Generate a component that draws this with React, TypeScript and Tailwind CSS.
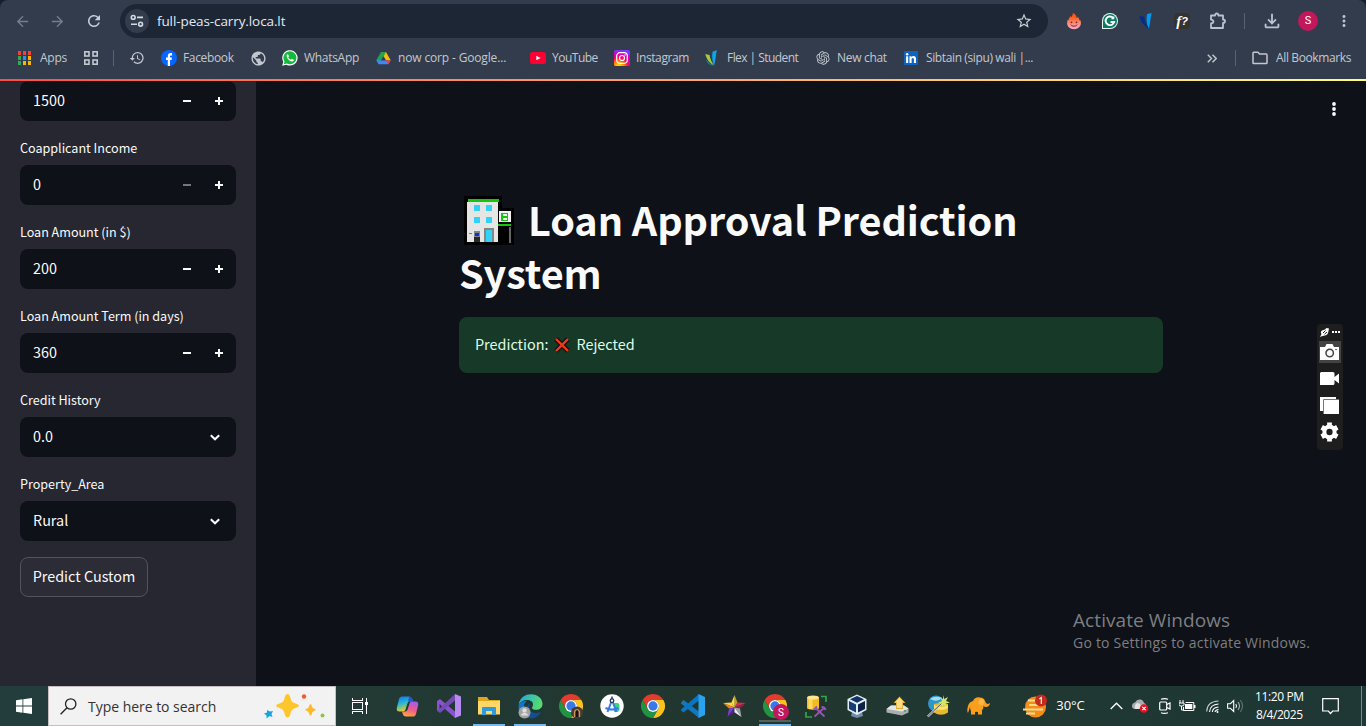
import React from "react";
import {
  MdStarBorder,
  MdOutlineFileDownload,
  MdHistory,
  MdPublic,
  MdMoreVert,
  MdRefresh,
  MdArrowBack,
  MdArrowForward,
} from "react-icons/md";
import { RiOpenaiFill } from "react-icons/ri";

const segoe = "font-['Open_Sans','Noto_Sans',sans-serif]";
const source = "font-['Noto_Sans_CJK_SC',sans-serif]";

/* ---------- Browser icons ---------- */

function TuneIcon() {
  return (
    <svg width="14" height="14" viewBox="0 0 14 14" fill="none" stroke="#d5dae2" strokeWidth="1.6">
      <circle cx="3.2" cy="3.4" r="1.9" />
      <path d="M7 3.4h6M1 10.2h6" />
      <circle cx="10.6" cy="10.2" r="1.9" />
    </svg>
  );
}

function AppsGrid() {
  const colors = ["#f44336", "#f44336", "#f44336", "#34a853", "#2196f3", "#fbb400", "#34a853", "#fbb400", "#fbb400"];
  return (
    <svg width="14" height="14" viewBox="0 0 14 14" shapeRendering="crispEdges">
      {colors.map((c, i) => (
        <rect key={i} x={(i % 3) * 5} y={Math.floor(i / 3) * 5} width="3" height="4" fill={c} />
      ))}
    </svg>
  );
}

function SquaresIcon() {
  return (
    <svg width="14" height="14" viewBox="0 0 14 14" fill="none" stroke="#c3c8d0" strokeWidth="1.6">
      <rect x="0.8" y="0.8" width="4.2" height="4.2" />
      <rect x="9" y="0.8" width="4.2" height="4.2" />
      <rect x="0.8" y="9" width="4.2" height="4.2" />
      <rect x="9" y="9" width="4.2" height="4.2" />
    </svg>
  );
}

function FacebookIcon() {
  return (
    <svg width="16" height="16" viewBox="0 0 16 16">
      <circle cx="8" cy="8" r="8" fill="#0866ff" />
      <path d="M6.8 16V9.9H5V7.4h1.8V6.1c0-2 1.1-3 2.8-3 .7 0 1.3.1 1.5.2v2.1h-1c-.9 0-1.1.5-1.1 1.1v.9H11l-.4 2.5H9V16z" fill="#fff" />
    </svg>
  );
}

function WhatsIcon() {
  return (
    <svg width="16" height="16" viewBox="0 0 16 16">
      <path d="M.2 15.800l1.100-4A7.700 7.700 0 1 1 4.300 14.700z" fill="#fff" />
      <path d="M1.700 14.300l.8-2.900A6.500 6.500 0 1 1 4.800 13.500z" fill="#14b83d" />
      <path d="M5.600 4.200c-.7.2-1.200 1-1 2 .5 2.600 2.900 4.900 5.300 5.200 1 .1 1.700-.5 1.900-1.200.1-.4-.1-.6-.4-.7l-1.500-.7c-.6-.1-.6.8-1.100.8-.9-.2-2.200-1.400-2.500-2.200 0-.5.7-.6.6-1.100l-.7-1.700c-.1-.3-.3-.4-.6-.4z" fill="#fff" />
    </svg>
  );
}

function DriveIcon() {
  return (
    <svg width="15" height="14" viewBox="0 0 15 14">
      <path d="M5 1h5l4.700 8.300H9.800z" fill="#fbbc04" />
      <path d="M5 1h5L7.500 5.400 5.200 9.300 2.800 13.300.3 9.300z" fill="#21a352" />
      <path d="M.3 9.300h14.400l-2.500 4H2.800z" fill="#4285f4" />
      <path d="M9.800 9.300h4.900l-2.500 4z" fill="#ea4335" />
      <path d="M7.500 5.400l2.300 3.900H5.200z" fill="#323c4d" />
    </svg>
  );
}

function YouTubeIcon() {
  return (
    <svg width="16" height="12" viewBox="0 0 16 12">
      <rect width="16" height="12" rx="2.800" fill="#ff0033" />
      <path d="M6.300 3.800L10.500 6 6.300 8.200z" fill="#fff" />
    </svg>
  );
}

function InstagramIcon() {
  return (
    <svg width="16" height="16" viewBox="0 0 16 16">
      <defs>
        <radialGradient id="ig" cx="0.3" cy="1.050" r="1.050">
          <stop offset="0.1" stopColor="#ffd200" />
          <stop offset="0.35" stopColor="#ff7a00" />
          <stop offset="0.55" stopColor="#ff0169" />
          <stop offset="0.8" stopColor="#d300c5" />
          <stop offset="1" stopColor="#7638fa" />
        </radialGradient>
      </defs>
      <rect width="16" height="16" rx="1.500" fill="url(#ig)" />
      <g fill="none" stroke="#fff" strokeWidth="1.200">
        <rect x="2.700" y="2.700" width="10.600" height="10.600" rx="3.200" />
        <circle cx="8" cy="8" r="2.500" />
      </g>
      <circle cx="11.100" cy="4.900" r=".7" fill="#fff" />
    </svg>
  );
}

function FlexIcon() {
  return (
    <svg width="13" height="16" viewBox="0 0 13 16">
      <path d="M7.600 1.400L12 .2C10.600 4 11 10.500 9 15.500 7 11 6.800 6 7.600 1.400z" fill="#0da5e8" />
      <path d="M.3 4l4.200.9c.6 4 2.200 7 4.500 10.600C4.800 13 1.500 9.500.3 4z" fill="#a7c93a" />
      <path d="M1 9.500C3 12.500 6 14.300 9 15.500 5 15.500 2 13.800 1 9.500z" fill="#1382a7" />
    </svg>
  );
}

function LinkedInIcon() {
  return (
    <svg width="14" height="14" viewBox="0 0 14 14">
      <rect width="14" height="14" rx="1" fill="#0a66c2" />
      <g fill="#fff">
        <rect x="2.100" y="5.300" width="2.100" height="6.700" />
        <circle cx="3.150" cy="3.200" r="1.250" />
        <path d="M5.500 5.300h2v.9c.4-.7 1.100-1.100 2-1.100 2 0 2.500 1.300 2.500 3.100V12H9.900V8.600c0-.9-.1-1.700-1.100-1.700s-1.200.8-1.200 1.700V12H5.500z" />
      </g>
    </svg>
  );
}

function FireIcon() {
  return (
    <svg width="14" height="17" viewBox="0 0 14 17">
      <defs>
        <linearGradient id="fire" x1="0" x2="0" y1="0" y2="1">
          <stop offset="0.25" stopColor="#ff5a14" />
          <stop offset="0.55" stopColor="#ff8468" />
          <stop offset="1" stopColor="#ffa6c8" />
        </linearGradient>
      </defs>
      <path
        d="M5.800 0C8.500 1.200 9.600 3 9.700 5.200L10.800 3.800C12 5 12.400 6.200 12.300 7.600L13.200 7C13.800 8 14 9.500 13.900 10.600C13.600 14 10.800 16.200 7 16.200S.3 14 .1 10.600C0 9 .3 7.600 1 6.300L1.800 7.500C1.900 5.800 2.400 4.300 3.600 3L4.400 4.200C5.300 3 5.900 1.600 5.800 0Z"
        fill="url(#fire)"
      />
      <circle cx="4.500" cy="9.300" r=".9" fill="#5f2d2c" />
      <circle cx="9.500" cy="9.300" r=".9" fill="#5f2d2c" />
      <path d="M3.700 11.700c1.900 2 4.700 2 6.600 0" stroke="#5f2d2c" fill="none" />
    </svg>
  );
}

function GrammarlyIcon() {
  return (
    <svg width="16" height="16" viewBox="0 0 16 16">
      <path d="M0 16V8a8 8 0 1 1 8 8z" fill="#e7f5f0" />
      <path d="M1 15V8a7 7 0 1 1 7 7z" fill="#087c62" />
      <path d="M11.200 5A4.300 4.300 0 1 0 12.100 9H8.500" fill="none" stroke="#fff" strokeWidth="1.900" />
      <path d="M12.300 2.800v3.500H8.900z" fill="#fff" />
    </svg>
  );
}

function VeeIcon() {
  return (
    <svg width="14" height="16" viewBox="0 0 14 16">
      <path d="M8 1L12.700 0C11.200 4 11.700 10.500 9.700 15.700 7.400 11 7.200 6 8 1z" fill="#0099f2" />
      <path d="M.3 3l5 .7c.3 4.300 1.900 8 4.400 12C4.600 12.500 1 8 .3 3z" fill="#082b86" />
    </svg>
  );
}

function PuzzleIcon() {
  return (
    <svg className="ml-[19px]" width="18" height="18" viewBox="0 0 18 18" fill="none" stroke="#b7c2d5" strokeWidth="1.800" strokeLinejoin="round">
      <path d="M2 3.500h4q0-2 1.700-2t1.700 2H14v4q2 .2 2 1.800T14 11v5H2v-4.500q2.400-.3 2.400-1.900T2 7.700z" />
    </svg>
  );
}

function FolderOutline() {
  return (
    <svg width="16" height="14" viewBox="0 0 16 14" fill="none" stroke="#c3c8d0" strokeWidth="1.500">
      <path d="M1 12.500V2q0-.8.8-.8h4.100l1.700 1.900h6.600q.8 0 .8.800v7.800q0 .8-.8.800H1.800q-.8 0-.8-.8z" />
    </svg>
  );
}

function Bookmark({ icon, label, width, tracking = "" }: { icon: React.ReactNode; label?: string; width: string; tracking?: string }) {
  return (
    <div className={`flex shrink-0 items-center ${width}`}>
      <span className="flex w-[22px] shrink-0 items-center">{icon}</span>
      {label && <span className={`whitespace-nowrap ${tracking}`}>{label}</span>}
    </div>
  );
}

function BrowserBar() {
  return (
    <header className={`h-[79px] shrink-0 bg-[#151e2b] text-[#c3c8d0] ${segoe}`}>
      <div className="flex h-full flex-col rounded-t-lg bg-[#323c4d]">
        <div className="flex h-[42px] items-center pr-[13px]">
          <MdArrowBack className="ml-[14px] size-[17px] text-[#757d8a]" />
          <MdArrowForward className="ml-[18px] size-[17px] text-[#757d8a]" />
          <MdRefresh className="ml-[19px] size-[18px] text-[#c5cee0]" />
          <div className="ml-[17px] flex h-[34px] w-[928px] items-center rounded-full bg-[#1c2635] pl-[5px] pr-[15px]">
            <span className="flex size-6 items-center justify-center rounded-full bg-[#323c4d]">
              <TuneIcon />
            </span>
            <span className="ml-2 text-[13.5px] tracking-[-0.1px] text-[#e4e8ef]">full-peas-carry.loca.lt</span>
            <MdStarBorder className="ml-auto size-[18px] text-[#c9ced6]" />
          </div>
          <div className="ml-[19px] flex flex-1 items-center">
            <span className="w-[35px]"><FireIcon /></span>
            <span className="w-[37px]"><GrammarlyIcon /></span>
            <span className="w-[35px]"><VeeIcon /></span>
            <span className="flex size-4 items-center justify-center rounded-sm bg-[#333] font-['Liberation_Serif',serif] text-[15px] font-bold italic leading-none text-white">
              f<span className="font-['Liberation_Sans',sans-serif] text-[11px]">?</span>
            </span>
            <PuzzleIcon />
            <span className="ml-[17px] h-4 w-px bg-[#586273]" />
            <MdOutlineFileDownload className="ml-[16px] size-[22px] text-[#b7c2d5]" />
            <span className="ml-[15px] flex size-5 items-center justify-center rounded-full bg-[#c2185b] font-[Roboto,sans-serif] text-[11px] text-white">
              S
            </span>
            <MdMoreVert className="ml-[17px] size-[18px] text-[#b7c2d5]" />
          </div>
        </div>
        <div className="flex h-8 items-center pl-[19px] pr-[14px] text-[12px]">
          <Bookmark icon={<AppsGrid />} label="Apps" width="w-[65px] -ml-px mr-px" tracking="tracking-[-0.25px]" />
          <SquaresIcon />
          <span className="ml-[15px] mr-[15px] h-4 w-px bg-[#586273]" />
          <MdHistory className="mr-[16px] size-4" />
          <Bookmark icon={<FacebookIcon />} label="Facebook" width="w-[89px]" tracking="tracking-[-0.35px]" />
          <MdPublic className="mr-[15px] size-[17px]" />
          <Bookmark icon={<WhatsIcon />} label="WhatsApp" width="w-[94px]" tracking="tracking-[-0.3px]" />
          <Bookmark icon={<DriveIcon />} label="now corp - Google..." width="w-[154px]" tracking="tracking-[-0.15px]" />
          <Bookmark icon={<YouTubeIcon />} label="YouTube" width="w-[84px]" tracking="tracking-[-0.5px]" />
          <Bookmark icon={<InstagramIcon />} label="Instagram" width="w-[91px]" tracking="tracking-[-0.4px]" />
          <Bookmark icon={<FlexIcon />} label="Flex | Student" width="w-[110px]" tracking="tracking-[-0.55px]" />
          <Bookmark icon={<RiOpenaiFill className="size-4" />} label="New chat" width="w-[89px]" tracking="tracking-[-0.3px]" />
          <Bookmark icon={<LinkedInIcon />} label="Sibtain (sipu) wali |..." width="w-[149px]" tracking="tracking-[-0.38px]" />
          <svg className="ml-auto" width="10" height="9" viewBox="0 0 10 9" fill="none" stroke="#c3c8d0" strokeWidth="1.400">
            <path d="M.8.7l3.700 3.800L.8 8.300M5.500.7l3.700 3.800-3.700 3.800" />
          </svg>
          <span className="ml-[18px] mr-[16px] h-4 w-px bg-[#586273]" />
          <FolderOutline />
          <span className="ml-2 w-[76px] whitespace-nowrap tracking-[-0.37px]">All Bookmarks</span>
        </div>
      </div>
    </header>
  );
}

/* ---------- Application ---------- */

function Label({ children }: { children: React.ReactNode }) {
  return <div className="mb-1 mt-4 flex h-6 items-center whitespace-nowrap pb-[2px] text-[12.6px] leading-none tracking-[-0.02px]">{children}</div>;
}

function NumberField({ value, atMin }: { value: string; atMin?: boolean }) {
  return (
    <div className="flex h-10 items-center rounded-lg bg-[#0e1117] pl-[13px] text-[14.4px] leading-none">
      <span className="flex-1 pb-[2px]">{value}</span>
      <svg width="64" height="40" viewBox="0 0 64 40" shapeRendering="crispEdges">
        <rect x="11" y="19" width="8" height="2" fill={atMin ? "#747780" : "#fafafa"} />
        <path d="M43 19h3v-3h2v3h3v2h-3v3h-2v-3h-3z" fill="#fafafa" />
      </svg>
    </div>
  );
}

function SelectField({ value }: { value: string }) {
  return (
    <div className="flex h-10 items-center rounded-lg bg-[#0e1117] pl-[13px] pr-4 text-[14.4px] leading-none">
      <span className="flex-1 pb-[2px]">{value}</span>
      <svg width="10" height="7" viewBox="0 0 10 7" fill="none" stroke="#fafafa" strokeWidth="2">
        <path d="M.8 1.200L5 5.300l4.200-4.100" />
      </svg>
    </div>
  );
}

function Sidebar() {
  return (
    <aside className={`w-64 shrink-0 bg-[#262730] px-5 text-[#fafafa] ${source}`}>
      <NumberField value="1500" />
      <Label>Coapplicant Income</Label>
      <NumberField value="0" atMin />
      <Label>Loan Amount (in $)</Label>
      <NumberField value="200" />
      <Label>Loan Amount Term (in days)</Label>
      <NumberField value="360" />
      <Label>Credit History</Label>
      <SelectField value="0.0" />
      <Label>Property_Area</Label>
      <SelectField value="Rural" />
      <button className="mt-4 flex h-10 w-32 items-center justify-center whitespace-nowrap rounded-lg border border-[#52535b] bg-[#2b2c36] pb-[2px] text-[14.4px] leading-none">
        Predict Custom
      </button>
    </aside>
  );
}

function BankIcon() {
  return (
    <svg className="ml-[5px] mt-[4px] shrink-0" width="50" height="50" viewBox="0 0 50 50" shapeRendering="crispEdges">
      <path d="M0 0h38v12h12v37H0z" fill="#000" />
      <rect x="4" y="3" width="31" height="3" fill="#16c60c" />
      <rect x="3" y="6" width="31" height="40" fill="#e5e5e5" />
      <g fill="#31d2f7">
        <rect x="10" y="9" width="6" height="6" />
        <rect x="22" y="9" width="6" height="6" />
        <rect x="10" y="21" width="6" height="6" />
        <rect x="22" y="21" width="6" height="6" />
      </g>
      <rect x="20" y="32" width="10" height="14" fill="#858585" />
      <rect x="22" y="34" width="6" height="12" fill="#31d2f7" />
      <rect x="10" y="35" width="6" height="6" fill="#858585" />
      <rect x="11" y="37" width="4" height="3" fill="#0037da" />
      <rect x="10" y="41" width="6" height="5" fill="#292929" />
      <rect x="5" y="37" width="3" height="1" fill="#16c60c" />
      <rect x="35" y="15" width="12" height="11" fill="#f2f2f2" />
      <path d="M37 17h7v8h-7z M39 18v2h4v-2z M39 22v2h4v-2z" fillRule="evenodd" fill="#16c60c" />
      <rect x="34" y="28" width="13" height="2" fill="#16c60c" />
      <rect x="45" y="31" width="2" height="16" fill="#666" />
    </svg>
  );
}

function MainPanel() {
  return (
    <main className={`relative flex-1 bg-[#0e1117] pl-[203px] pr-[203px] pt-[111px] text-[#fafafa] ${source}`}>
      <h1 className="w-[704px] text-[39.6px] font-bold leading-[53px] tracking-[-0.08px]">
        <span className="flex h-[53px] items-start">
          <BankIcon />
          <span className="ml-[14px] whitespace-nowrap">Loan Approval Prediction</span>
        </span>
        <span className="block h-[53px]">System</span>
      </h1>
      <div className="mt-[19px] flex h-14 w-[704px] items-center rounded-lg bg-[#173928] px-4 text-[14.4px] leading-none text-[#dffde9]">
        <span className="pb-[2px]">Prediction:</span>
        <svg className="mx-[6px]" width="16" height="16" viewBox="0 0 16 16">
          <path d="M2 2l12 12M14 2L2 14" stroke="#16100d" strokeWidth="4.800" />
          <path d="M2 2l12 12M14 2L2 14" stroke="#f03a17" strokeWidth="2.400" />
        </svg>
        <span className="pb-[2px]">Rejected</span>
      </div>
      <svg className="absolute right-[29px] top-[20px]" width="6" height="16" viewBox="0 0 6 16" fill="#fafafa">
        <circle cx="3" cy="3" r="1.900" />
        <circle cx="3" cy="8" r="1.900" />
        <circle cx="3" cy="13" r="1.900" />
      </svg>
      <CapturePanel />
      <div className={`absolute left-[817px] top-[526px] whitespace-nowrap text-[#7d7f83] ${segoe}`}>
        <div className="text-[19px] leading-[26px] tracking-[0.08px]">Activate Windows</div>
        <div className="text-[14px] leading-[20px] tracking-[0.22px]">Go to Settings to activate Windows.</div>
      </div>
    </main>
  );
}

function CapturePanel() {
  return (
    <div className="absolute right-[23px] top-[243px] flex h-[126px] w-[26px] flex-col items-start rounded-sm bg-[#1e1e1e] pl-[2px]">
      <div className="ml-[1px] mt-[3px] flex h-[10px] items-center gap-[3px]">
        <svg width="9" height="9" viewBox="0 0 9 9">
          <path d="M0 9l1.500-3Q0 4 2 2.500L5 1.500 6.500 0 9 .5 8.500 3Q8 7 5 7.500L2.500 8z" fill="#fff" />
          <path d="M3 5l2.500-2.500M4.500 6.200L7 4" stroke="#1e1e1e" />
        </svg>
        <svg width="8" height="2" viewBox="0 0 8 2" fill="#fff">
          <path d="M0 0h2v2H0zM3 0h2v2H3zM6 0h2v2H6z" />
        </svg>
      </div>
      <div className="mt-1 flex h-[22px] w-[22px] items-center pl-[1px] bg-[#434343]">
        <svg width="19" height="16" viewBox="0 0 19 16">
          <path d="M0 3h5l1.500-3h6L14 3h5v13H0z" fill="#fff" />
          <circle cx="9.700" cy="9" r="3.700" fill="#fff" stroke="#434343" strokeWidth="1.500" />
          <circle cx="16" cy="5.500" r=".8" fill="#434343" />
        </svg>
      </div>
      <svg className="ml-px mt-[9px]" width="19" height="13" viewBox="0 0 19 13" fill="#fff">
        <path d="M1 0h12q1.500 0 1.500 1.500V5L19 1.500v10L14.500 8v3.500q0 1.500-1.500 1.500H0V1z" />
      </svg>
      <svg className="ml-px mt-[12px]" width="19" height="17" viewBox="0 0 19 17">
        <path d="M0 0h16v14H0z" fill="#fff" />
        <path d="M3.500 2.500H19V17H3.500z" fill="#fff" />
        <path d="M3.500 17V2.500H19" fill="none" stroke="#777" />
      </svg>
      <svg className="ml-px mt-[8px]" width="19" height="20" viewBox="0 0 20 20" preserveAspectRatio="none">
        <circle cx="10" cy="10" r="5.400" fill="none" stroke="#fff" strokeWidth="4.200" />
        <g stroke="#fff" strokeWidth="5">
          <path d="M10 .5v4M10 15.500v4M1.800 5.250l3.400 2M14.800 12.750l3.400 2M1.800 14.750l3.400-2M14.800 7.250l3.400-2" />
        </g>
      </svg>
    </div>
  );
}

/* ---------- Taskbar icons ---------- */

function ChromeLogo({ badge }: { badge?: React.ReactNode }) {
  return (
    <svg width="24" height="24" viewBox="0 0 48 48" className="overflow-visible">
      <path d="M3.200 12A24 24 0 0 1 44.800 12H24A12 12 0 0 0 13.600 30z" fill="#e33b2e" />
      <path d="M44.800 12A24 24 0 0 1 24 48L34.400 30A12 12 0 0 0 24 12z" fill="#fcc31e" />
      <path d="M24 48A24 24 0 0 1 3.200 12L13.600 30A12 12 0 0 0 34.400 30z" fill="#229342" />
      <circle cx="24" cy="24" r="12" fill="#fff" />
      <circle cx="24" cy="24" r="9.300" fill="#3b78e7" />
      {badge}
    </svg>
  );
}

function CopilotLogo() {
  return (
    <svg width="23" height="21" viewBox="0 0 23 21">
      <defs>
        <linearGradient id="cpa" x1="0" y1="0" x2="0.3" y2="1">
          <stop stopColor="#1b6ee8" />
          <stop offset="0.5" stopColor="#22b8d8" />
          <stop offset="1" stopColor="#e9c92c" />
        </linearGradient>
        <linearGradient id="cpb" x1="0.6" y1="0" x2="0.3" y2="1">
          <stop stopColor="#a55bea" />
          <stop offset="0.5" stopColor="#ef5b8c" />
          <stop offset="1" stopColor="#ffa63d" />
        </linearGradient>
      </defs>
      <path d="M5.500.5H13q2.500 0 3.200 2.500l.8 2.500h-3q-2 0-2.600 2L9.500 13.500q-.6 2-2.500 2H3.500Q.2 15.500.8 12L3 3Q3.700.5 5.500.5z" fill="url(#cpa)" />
      <path d="M17.500 20.500H10q-2.500 0-3.200-2.500L6 15.500h3q2 0 2.600-2l1.900-6q.6-2 2.500-2h3.500q3.300 0 2.700 3.500L20 18q-.7 2.500-2.500 2.500z" fill="url(#cpb)" />
      <path d="M13 .5q2.500 0 3.200 2.500l.8 2.500h-3q-1.200 0-1.900.7z" fill="#2456cf" />
    </svg>
  );
}

function VisualStudioLogo() {
  return (
    <svg width="24" height="24" viewBox="0 0 24 24">
      <path d="M0 7l3-2 15 12.500V24L2.500 10v6.500L0 16.500z" fill="#8b52cf" />
      <path d="M0 17l18-17v6.500L3 19z" fill="#744bb6" />
      <path d="M18 0l6 2.500v19L18 24z" fill="#b68af0" />
    </svg>
  );
}

function ExplorerLogo() {
  return (
    <svg width="22" height="18" viewBox="0 0 22 18">
      <path d="M0 0h9l2 3h11v14H0z" fill="#e5a51a" />
      <path d="M0 4h22v13.500H0z" fill="#ffd869" />
      <path d="M4 18v-7q0-1 1-1h12q1 0 1 1v7h-4v-4H8v4z" fill="#2f9bdd" />
    </svg>
  );
}

function EdgeLogo() {
  return (
    <svg width="25" height="25" viewBox="0 0 25 25">
      <defs>
        <linearGradient id="edge" x1="0" x2="1" y1="0.2" y2="0.5">
          <stop stopColor="#21a8e3" />
          <stop offset="1" stopColor="#58dc6b" />
        </linearGradient>
      </defs>
      <path d="M.5 11C2 3.500 7 .3 13 .3c7 0 11.500 4.500 11.500 9.500 0 4-3 6-6.500 6-2.500 0-4-.8-4-1.800s1-1.500 1-3.500c0-3-2.500-4.500-6-4.500C5 6 2 8 .5 11z" fill="url(#edge)" />
      <path d="M.5 13C.5 9 4.500 6.500 9 7c-3 2-4 5-2 9 2 3.500 7 5.500 13 3.500-2 3-5 5-9 4.500C5 23.500.5 19 .5 13z" fill="#1275c8" />
      <path d="M12 9c-2 3-1 8 3 9.500 3 1 5 .5 8-1-2 5-7 8-12 6.500C6 22 5 14 12 9z" fill="#124e91" />
      <circle cx="6.500" cy="18.500" r="6" fill="#a3a3a3" />
      <circle cx="6.500" cy="16.500" r="2.200" fill="#dedede" />
      <path d="M3 21.500q0-2.500 3.500-2.500t3.500 2.500z" fill="#dedede" />
    </svg>
  );
}

function AndroidStudioLogo() {
  return (
    <svg width="24" height="24" viewBox="0 0 24 24">
      <circle cx="12" cy="12" r="11.700" fill="#fff" />
      <path d="M14 9h3q2.500 0 2.500 3v3q0 3-3 3H14z" fill="#38d47b" />
      <path d="M12 6L7.500 18M12 6l4.500 12M5.500 14q6.500 3 13 0" stroke="#3879e8" strokeWidth="2" fill="none" />
      <path d="M12 2.500V5" stroke="#203b60" strokeWidth="1.500" />
      <circle cx="12" cy="6.700" r="1.800" fill="#fff" stroke="#203b60" strokeWidth="1.300" />
    </svg>
  );
}

function VsCodeLogo() {
  return (
    <svg width="24" height="24" viewBox="0 0 24 24">
      <path d="M0 8.500l2.500-2.500L18 17.500V24L0 9.500z" fill="#1477bd" />
      <path d="M0 15.500L18 0v6.500L2.500 18.500 0 16.500z" fill="#0876c4" />
      <path d="M17.500 0L24 3v18l-6.500 3z" fill="#29a3ef" />
    </svg>
  );
}

function StarLogo() {
  return (
    <svg width="23" height="22" viewBox="0 0 23 22">
      <path d="M11.500 0l3 7.500-3 5z" fill="#d09a20" />
      <path d="M11.500 0l-3 7.500 3 5z" fill="#ffdf45" />
      <path d="M0 8l8.500-.5 3 5z" fill="#ffd23a" />
      <path d="M0 8l6 5.500 5.500-1z" fill="#ed8126" />
      <path d="M14.500 7.500L23 8l-11.500 4.500z" fill="#d52d50" />
      <path d="M23 8l-6 5.500-5.500-1z" fill="#93204a" />
      <path d="M4.500 22L6 13.500l5.500-1z" fill="#7a40cd" />
      <path d="M4.500 22l7-4.700v-4.800z" fill="#522491" />
      <path d="M18.500 22L17 13.500l-5.500-1z" fill="#9b9fa9" />
      <path d="M18.500 22l-7-4.700v-4.800z" fill="#eee" />
    </svg>
  );
}

function DatabaseLogo() {
  return (
    <svg width="22" height="23" viewBox="0 0 22 23" fill="none">
      <path d="M16 1.500h5V7M1 17v5h6" stroke="#35a44a" strokeWidth="1.700" />
      <path d="M2 2.500h12v11q-6 2.500-12 0z" fill="#f2bc21" />
      <path d="M3.500 3h4v11h-4z" fill="#ffd962" />
      <ellipse cx="8" cy="2.500" rx="6" ry="2" fill="#ffe68c" />
      <path d="M10.500 13l9 8.500M19 13l-9.500 8.500" stroke="#9852ba" strokeWidth="1.800" />
      <path d="M9 14.500l3-3M16.500 12q3.500 0 4 3" stroke="#9852ba" strokeWidth="2" />
    </svg>
  );
}

function CubeLogo() {
  return (
    <svg width="20" height="24" viewBox="0 0 20 24">
      <path d="M5 18h10l1 4-6 2-6-2z" fill="#718ba8" />
      <path d="M10 .5L19.500 5v11L10 21 .5 16V5z" fill="#e4edf6" />
      <path d="M10 2l7 3.300-7 3.500-7-3.500z" fill="#12345f" />
      <path d="M2 7l7 3.500v8L2 15z" fill="#153f70" />
      <path d="M18 7l-7 3.500v8l7-3.500z" fill="#0a2347" />
    </svg>
  );
}

function DriveUploadLogo() {
  return (
    <svg width="23" height="20" viewBox="0 0 23 20">
      <path d="M.5 13L5 9.500h13l4.500 3v4L16 19.500.5 16.500z" fill="#a9aeb1" />
      <path d="M.5 13L5 9.500h13l4.500 3L16 15.500z" fill="#e5e6e4" />
      <path d="M10 13V7H7.500l6-6.500 6 6.500H17v6z" fill="#e2aa35" />
      <path d="M10.800 12V6.200H9l4.500-4.700L18 6.200h-1.800V12z" fill="#ffdd85" />
      <circle cx="19" cy="15" r="1" fill="#45a838" />
    </svg>
  );
}

function WandLogo() {
  return (
    <svg width="23" height="24" viewBox="0 0 23 24">
      <circle cx="9" cy="9.500" r="8" fill="#3096c9" />
      <path d="M3 5q5-4 12-1-5 5-12 1z" fill="#9de0ef" />
      <path d="M7 10q7-2 14 0v8.500q-7 4.500-14 0z" fill="#e6b92e" />
      <path d="M7 14q7 4 14 0v-3q-7 4-14 0z" fill="#ffe06a" />
      <path d="M.8 22.500L16 8" stroke="#d9dde0" strokeWidth="2.300" />
      <path d="M.8 22.500L16 8" stroke="#454b52" />
      <path d="M16 1l1.200 4L21 3l-2 4 4 1.500-4.500 1 1.500 3.500-3.500-2-1.500 2.500-.5-4L11 8.500l4-1.200-1.500-4 2.500 2z" fill="#d2e66b" />
    </svg>
  );
}

function ElephantLogo() {
  return (
    <svg width="23" height="18" viewBox="0 0 23 18">
      <path d="M1 9q1-4 5-5Q8-.5 13 .5q4 0 5 3.500 1 3 2.500 3 1-.2 2.500-1-.5 4-4 4-2 0-2.500-1 0 3-1.500 4v4.500h-4V15q-2-.5-3 0v2.500H4V14Q3 12 3 10L1 16Q-.5 14 1 9z" fill="#f99f1c" />
      <path d="M13 2q4-1 4 3t-4 3q-3-2 0-6z" fill="#ffb84b" />
    </svg>
  );
}

function Sparkles() {
  return (
    <svg width="61" height="25" viewBox="0 0 61 25">
      <path d="M23.500 0q2.300 0 3.200 5 .8 3.500 4.800 4.500 3.500 1 3.500 2.300t-3.500 2.300q-4 1-4.800 4.500-.9 5-3.200 5t-3.200-5q-.8-3.500-4.800-4.500-3.500-1-3.500-2.300t3.500-2.300q4-1 4.800-4.500.9-5 3.200-5z" fill="#fec62c" />
      <path d="M46.500 10q1 0 1.500 2.500.5 2 3 2.500 1.800.7 0 1.500-2.500.5-3 2.500-.5 2.500-1.500 2.500T45 19q-.5-2-3-2.500-1.800-.8 0-1.500 2.500-.5 3-2.500.5-2.500 1.500-2.500z" fill="#fdb92c" />
      <path d="M3 16l3 1.500 3-.5-1.500 3 1 3-3-1-3 2.500v-3l-2.500-2 3-1z" fill="#18a4e0" />
      <circle cx="40" cy="2.500" r="2.200" fill="#f05c29" />
      <circle cx="58.500" cy="21.500" r="2" fill="#8dc63f" />
    </svg>
  );
}

function TaskCell({ children, active = "" }: { children: React.ReactNode; active?: string }) {
  return (
    <div className="flex h-10 w-[40.8px] shrink-0 flex-col items-center">
      <div className="flex h-[38px] items-center pt-[2px]">{children}</div>
      <div className={`z-0 h-[2px] w-8 ${active}`} />
    </div>
  );
}

function WeatherIcon() {
  return (
    <svg width="25" height="24" viewBox="0 0 25 24">
      <circle cx="12.500" cy="13" r="10.500" fill="#f58b19" />
      <path d="M5 6.500h12M6 11h12M0 15.500h20M3 19.500h9" stroke="#f5dc8a" strokeWidth="1.800" />
      <circle cx="18" cy="6.500" r="6" fill="#c42b1c" />
      <path d="M16.300 5l2-1.500v6.500" stroke="#fff" fill="none" strokeWidth="1.100" />
    </svg>
  );
}

function TrayIcons() {
  return (
    <>
      <svg className="ml-[25px]" width="13" height="8" viewBox="0 0 13 8" fill="none" stroke="#fff" strokeWidth="1.300">
        <path d="M.7 7l5.800-5.800L12.300 7" />
      </svg>
      <svg className="ml-[9px]" width="17" height="14" viewBox="0 0 17 14">
        <path d="M3 10Q0 10 0 7t3-3.500Q5 0 8 .5q3 0 4 3.500 3 1 3 6z" fill="#a9adae" />
        <path d="M5 4q3-1 6 6H3Q2 6 5 4z" fill="#e4e4e4" />
        <circle cx="12" cy="9.500" r="4.300" fill="#e81123" />
        <path d="M10.300 7.800l3.400 3.400M13.700 7.800l-3.400 3.400" stroke="#fff" strokeWidth="1.200" />
      </svg>
      <svg className="ml-[10px]" width="12" height="16" viewBox="0 0 12 16" fill="none" stroke="#fff" strokeWidth="1.200">
        <rect x=".7" y="4" width="7" height="8" rx="1" />
        <path d="M7.700 6.500L11 5v6L7.700 9.500M2 1.300q3.500-1.300 7 0M2 14.700q3.500 1.300 7 0" />
      </svg>
      <svg className="ml-[8px]" width="17" height="12" viewBox="0 0 17 12">
        <path d="M1 0v3M4 0v3M0 3h5v2q0 1-2.500 1T0 5zM2.500 6v4H5" fill="none" stroke="#fff" />
        <path d="M6.500 2.500h8.300v8H4.500V7" fill="none" stroke="#fff" />
        <rect x="6" y="4" width="7.300" height="5" fill="#fff" />
        <rect x="15" y="5" width="1.500" height="3" fill="#fff" />
      </svg>
      <svg className="ml-[10px]" width="13" height="13" viewBox="0 0 13 13" fill="none" stroke="#fff" strokeWidth="1.100">
        <path d="M.7 11.500Q1 1.500 12.500 1" stroke="#c2cbc8" />
        <path d="M3.500 12Q4 4.500 12.500 4M6.300 12Q6.800 7.300 12.500 7" />
        <path d="M9 12q.5-2.200 3.500-2.500" />
        <circle cx="11.500" cy="12" r="1" fill="#fff" stroke="none" />
      </svg>
      <svg className="ml-[8px]" width="17" height="14" viewBox="0 0 17 14" fill="none" stroke="#fff" strokeWidth="1.100">
        <path d="M.6 4.700h2.800L6.700 1.500v11L3.400 9.300H.6z" />
        <path d="M8.800 5q1.500 2 0 4" />
        <path d="M11 3q3 4 0 8" stroke="#a8b4b0" />
        <path d="M13.300 1q4.500 6 0 12" stroke="#62736e" />
      </svg>
    </>
  );
}

function Taskbar() {
  return (
    <footer className={`flex h-10 shrink-0 items-center bg-gradient-to-r from-[#233d3d] via-[#21362e] to-[#1f3835] text-white ${segoe}`}>
      <div className="flex w-12 items-center justify-center">
        <svg width="16" height="16" viewBox="0 0 16 16" fill="#fff">
          <path d="M0 2.200l6.500-.9v6.300H0zM7.300 1.200L16 0v7.600H7.300zM0 8.400h6.500v6.300L0 13.800zM7.300 8.400H16V16l-8.700-1.200z" />
        </svg>
      </div>
      <div className="flex h-10 w-72 items-center border border-[#c5bfc2] bg-[#f2f2f2] pl-[11px] pr-[10px] text-[#333]">
        <svg width="17" height="17" viewBox="0 0 17 17" fill="none" stroke="#222" strokeWidth="1.300">
          <circle cx="10.700" cy="6" r="5.200" />
          <path d="M7 9.700L.6 16.200" />
        </svg>
        <span className="ml-[11px] whitespace-nowrap text-[14px] tracking-[-0.03px]">Type here to search</span>
        <span className="ml-auto"><Sparkles /></span>
      </div>
      <div className="flex w-[51.4px] items-center justify-start pl-4">
        <svg width="16" height="16" viewBox="0 0 16 16" fill="none" stroke="#fff" shapeRendering="crispEdges">
          <path d="M.5 0v2.500h10V0M.5 16v-2.500h10V16M.5 4.500h10v7H.5zM14.500 0v16" />
          <path d="M13 4h3v3h-3z" fill="#fff" stroke="none" />
        </svg>
      </div>
      <TaskCell><CopilotLogo /></TaskCell>
      <TaskCell><VisualStudioLogo /></TaskCell>
      <TaskCell active="bg-[#76b9ed]"><ExplorerLogo /></TaskCell>
      <TaskCell active="bg-[#76b9ed]"><EdgeLogo /></TaskCell>
      <TaskCell>
        <ChromeLogo
          badge={
            <g>
              <circle cx="36" cy="37" r="12" fill="#4a392f" />
              <path d="M31 46V35q5-8 10 0v11" fill="none" stroke="#c99667" strokeWidth="2.500" />
              <path d="M36 33v13" stroke="#181313" strokeWidth="4" />
            </g>
          }
        />
      </TaskCell>
      <TaskCell><AndroidStudioLogo /></TaskCell>
      <TaskCell><ChromeLogo /></TaskCell>
      <TaskCell><VsCodeLogo /></TaskCell>
      <TaskCell><StarLogo /></TaskCell>
      <TaskCell active="bg-[#76b9ed] shadow-[0_-4px_0_#52625e]">
        <span className="relative z-10">
          <ChromeLogo
            badge={
              <g>
                <circle cx="36" cy="36" r="16" fill="#c2185b" />
                <text x="36" y="43" textAnchor="middle" fontSize="20" fill="#fff" fontFamily="Roboto, sans-serif">S</text>
              </g>
            }
          />
        </span>
      </TaskCell>
      <TaskCell><DatabaseLogo /></TaskCell>
      <TaskCell><CubeLogo /></TaskCell>
      <TaskCell><DriveUploadLogo /></TaskCell>
      <TaskCell><WandLogo /></TaskCell>
      <TaskCell><ElephantLogo /></TaskCell>
      <div className="flex flex-1 items-center pl-[24px]">
        <WeatherIcon />
        <span className="ml-[8px] w-[29px] whitespace-nowrap text-[13px] tracking-[-0.1px]">30°C</span>
        <TrayIcons />
        <div className="ml-[10px] flex w-[50px] flex-col items-center whitespace-nowrap text-[12px] leading-[18px] tracking-[-0.4px]">
          <span>11:20 PM</span>
          <span>8/4/2025</span>
        </div>
        <svg className="ml-[18px]" width="17" height="17" viewBox="0 0 17 17" fill="none" stroke="#fff" strokeWidth="1.200">
          <path d="M.7.700h15.600v12.300h-5.600L8.500 15.500l-2.200-2.500H.7z" />
        </svg>
        <span className="ml-auto mr-1 h-10 w-px bg-[#7c8a86]" />
      </div>
    </footer>
  );
}

export default function App() {
  return (
    <div className="flex h-[726px] w-[1366px] flex-col overflow-hidden bg-[#0e1117]">
      <BrowserBar />
      <div className="h-[2px] shrink-0 bg-gradient-to-r from-[#ff4b4b] via-[#ffa564] to-[#fffd80]" />
      <div className="flex min-h-0 flex-1">
        <Sidebar />
        <MainPanel />
      </div>
      <Taskbar />
    </div>
  );
}
